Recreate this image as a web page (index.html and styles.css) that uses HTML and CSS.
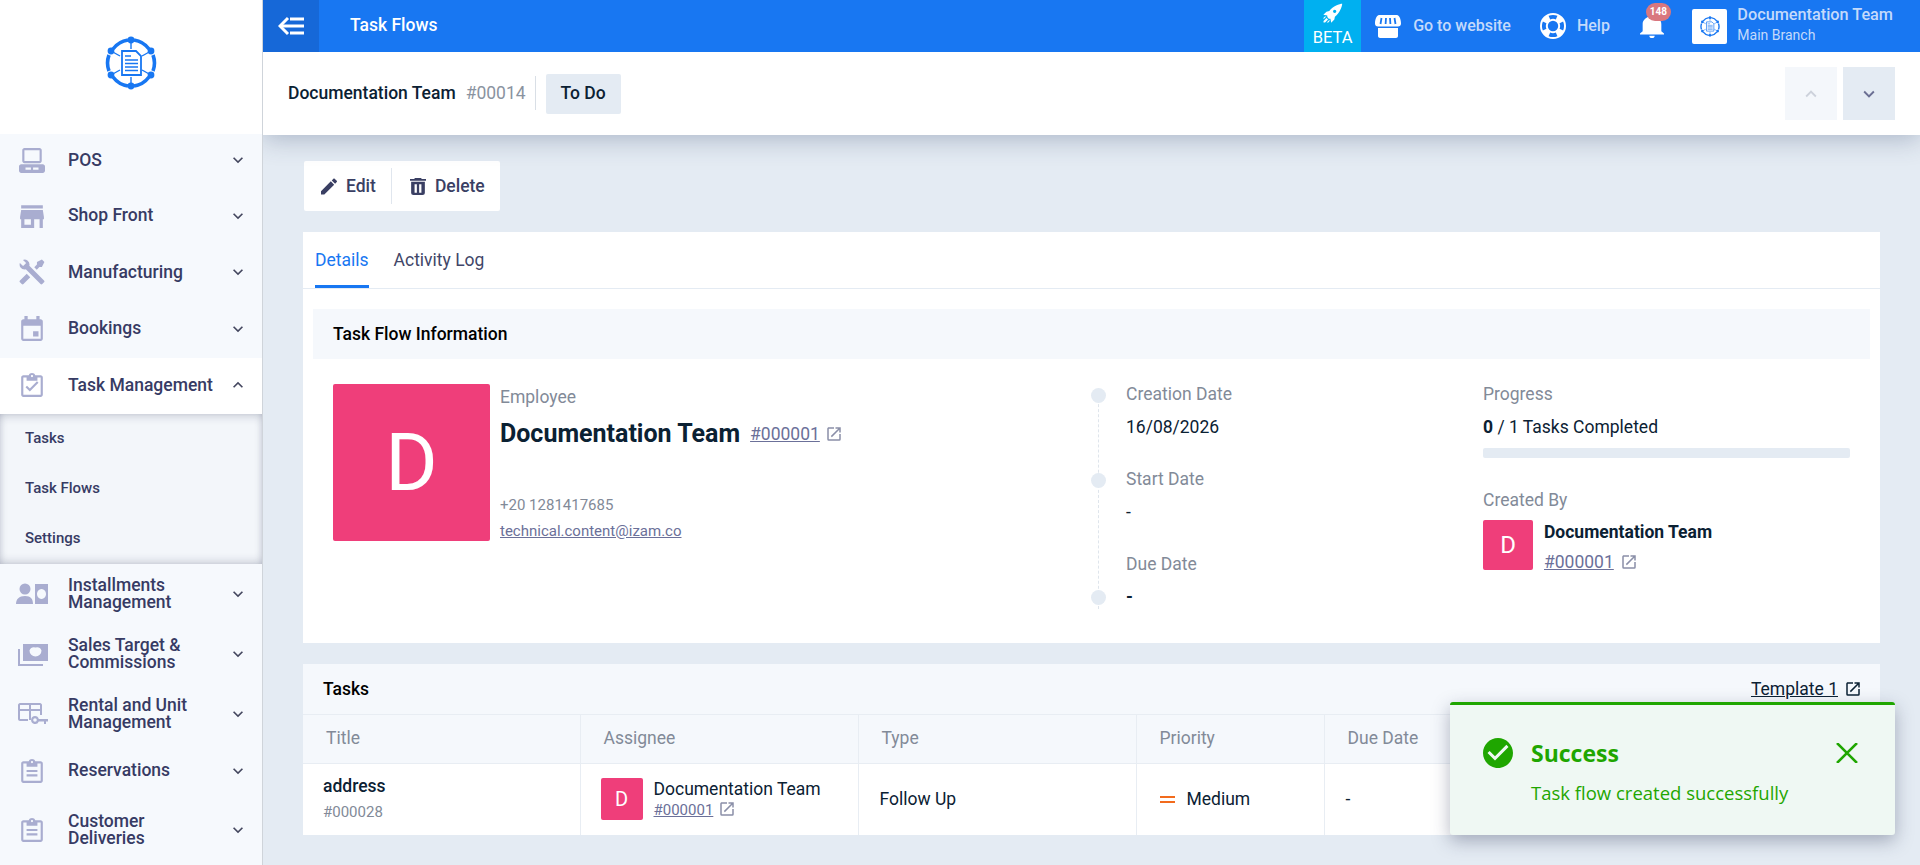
FILE: index.html
```html
<!DOCTYPE html>
<html lang="en">
<head>
    <meta charset="UTF-8">
    <meta name="viewport" content="width=device-width, initial-scale=1.0">
    <title>Task Flows</title>
    <link rel="stylesheet" href="styles.css">
</head>
<body>
    <svg class="sprite" aria-hidden="true">
        <symbol id="i-down" viewBox="0 0 24 24"><path d="M7.41,8.58L12,13.17L16.59,8.58L18,10L12,16L6,10L7.41,8.58Z"/></symbol>
        <symbol id="i-up" viewBox="0 0 24 24"><path d="M7.41,15.41L12,10.83L16.59,15.41L18,14L12,8L6,14L7.41,15.41Z"/></symbol>
        <symbol id="i-ext" viewBox="0 0 24 24"><path d="M14,3V5H17.59L7.76,14.83L9.17,16.24L19,6.41V10H21V3M19,19H5V5H12V3H5C3.89,3 3,3.9 3,5V19A2,2 0 0,0 5,21H19A2,2 0 0,0 21,19V12H19V19Z"/></symbol>
        <symbol id="i-clipboard" viewBox="0 0 24 24"><path d="M20 3h-5C14.600 1.800 13.400 1 12 1s-2.600.8-3 2H4C2.900 3 2 3.900 2 5v16c0 1.100.9 2 2 2h16c1.100 0 2-.9 2-2V5c0-1.100-.9-2-2-2zm-8-.2c.6 0 1 .4 1 1s-.4 1-1 1-1-.4-1-1 .4-1 1-1zM20 21H4V5h3v3h10V5h3v16zM7 11h10v2H7zm0 4h10v2H7z"/></symbol>
        <symbol id="i-logo" viewBox="0 0 52 54">
            <g fill="none" stroke="currentColor" stroke-width="3.600">
                <path d="M8 13A23 23 0 0 1 23 4M29 4A23 23 0 0 1 44 13M48 19A23 23 0 0 1 48 35M44 41A23 23 0 0 1 29 50M23 50A23 23 0 0 1 8 41M4 35A23 23 0 0 1 4 19"/>
            </g>
            <g stroke="currentColor" stroke-width="1.400">
                <path d="M26 4V13M26 41V50M6 15L15 20M46 15L37 20M6 39L15 34M46 39L37 34"/>
            </g>
            <g fill="currentColor">
                <circle cx="26" cy="4" r="3.400"/><circle cx="26" cy="50" r="3.400"/>
                <circle cx="6" cy="15" r="3.400"/><circle cx="46" cy="15" r="3.400"/>
                <circle cx="6" cy="39" r="3.400"/><circle cx="46" cy="39" r="3.400"/>
            </g>
            <path d="M17 15H31L36 20V39H17Z" fill="#fff" stroke="currentColor" stroke-width="1.800"/>
            <path d="M20 20H26M20 24H33M20 27.500H33M20 31H33M20 34.500H33" stroke="currentColor" stroke-width="1.400"/>
        </symbol>
    </svg>

    <aside class="sidebar">
        <div class="sidebar-logo">
            <svg class="logo-main"><use href="#i-logo"/></svg>
        </div>
        <nav class="nav">
            <a class="nav-item first" href="#">
                <svg class="nav-icon" viewBox="0 0 24 24"><path d="M5 1h14c1 0 2 1 2 2v10c0 1-1 2-2 2H5c-1 0-2-1-2-2V3c0-1 1-2 2-2zm0 2v10h14V3zM2 16h20c1 0 2 1 2 2v4c0 1-1 2-2 2H2c-1 0-2-1-2-2v-4c0-1 1-2 2-2zm4 3v2h5v-2zm7 0v2h5v-2z" fill-rule="evenodd"/></svg>
                <span>POS</span>
                <svg class="chev"><use href="#i-down"/></svg>
            </a>
            <a class="nav-item" href="#">
                <svg class="nav-icon" viewBox="0 0 24 24"><path d="M2 2H22V5H2V2M2 6.500H22L23 13V15H22V23H19V15H14V23H2V15H1V13L2 6.500M5 15V20H11V15H5Z"/></svg>
                <span>Shop Front</span>
                <svg class="chev"><use href="#i-down"/></svg>
            </a>
            <a class="nav-item" href="#">
                <svg class="nav-icon" viewBox="1.500 1.500 21 21"><path d="M21.71 20.29L20.29 21.71A1 1 0 0 1 18.88 21.71L7 9.850A3.810 3.810 0 0 1 6 10A4 4 0 0 1 2.220 4.700L4.760 7.240L5.290 6.710L6.710 5.290L7.240 4.760L4.700 2.220A4 4 0 0 1 10 6A3.810 3.810 0 0 1 9.850 7L21.71 18.88A1 1 0 0 1 21.71 20.29M2.290 18.88A1 1 0 0 0 2.290 20.29L3.710 21.71A1 1 0 0 0 5.120 21.71L10.59 16.25L7.760 13.42M20 2L16 4V6L13.830 8.170L15.830 10.17L18 8H20L22 4Z"/></svg>
                <span>Manufacturing</span>
                <svg class="chev"><use href="#i-down"/></svg>
            </a>
            <a class="nav-item" href="#">
                <svg class="nav-icon" viewBox="0 0 24 24"><path d="M20 3h-1V0h-3v3H8V0H5v3H4C2.900 3 2 3.900 2 5v16c0 1.100.9 2 2 2h16c1.100 0 2-.9 2-2V5c0-1.100-.9-2-2-2zm0 18H4V9h16v12zm-7-7h5v5h-5z"/></svg>
                <span>Bookings</span>
                <svg class="chev"><use href="#i-down"/></svg>
            </a>
            <a class="nav-item open" href="#">
                <svg class="nav-icon" viewBox="0 0 24 24"><path d="M20 3h-5C14.600 1.800 13.400 1 12 1s-2.600.8-3 2H4C2.900 3 2 3.900 2 5v16c0 1.100.9 2 2 2h16c1.100 0 2-.9 2-2V5c0-1.100-.9-2-2-2zm-8-.2c.6 0 1 .4 1 1s-.4 1-1 1-1-.4-1-1 .4-1 1-1zM20 21H4V5h3v3h10V5h3v16zM10 18l-4-4 1.400-1.400L10 15.200l6.600-6.600L18 10z"/></svg>
                <span>Task Management</span>
                <svg class="chev"><use href="#i-up"/></svg>
            </a>
            <div class="subnav">
                <a href="#">Tasks</a>
                <a href="#">Task Flows</a>
                <a href="#">Settings</a>
            </div>
            <a class="nav-item tall" href="#">
                <svg class="nav-icon wide" viewBox="0 0 32 24"><circle cx="9" cy="7" r="5.500"/><path d="M0 22c0-5 3-8 9-8s8 3 8 8zM19 2h13v20H19zm6.500 5a4.500 5 0 1 0 .01 0z" fill-rule="evenodd"/></svg>
                <span>Installments<br>Management</span>
                <svg class="chev"><use href="#i-down"/></svg>
            </a>
            <a class="nav-item tall" href="#">
                <svg class="nav-icon wide" viewBox="0 0 32 24"><path d="M7 2h25v17H7zm12.500 3.500a5 5 0 0 0-6 3 5 5 0 0 0 12 0 5 5 0 0 0-6-3zM2 7h2v15h23v2H2z" fill-rule="evenodd"/></svg>
                <span>Sales Target &amp;<br>Commissions</span>
                <svg class="chev"><use href="#i-down"/></svg>
            </a>
            <a class="nav-item tall" href="#">
                <svg class="nav-icon wide" viewBox="0 0 32 24"><path d="M4 1h20c1 0 2 1 2 2v10h-2V9H15v9h-2V9H4v8h8v2H4c-1 0-2-1-2-2V3c0-1 1-2 2-2zm0 2v4h9V3zm11 0v4h9V3zM19 14a4 4 0 0 1 3.800 3H32v2.500h-2V22h-2v-2.500h-5.200A4 4 0 1 1 19 14zm0 2.200a1.800 1.800 0 1 0 0 3.600 1.800 1.800 0 0 0 0-3.600z" fill-rule="evenodd"/></svg>
                <span>Rental and Unit<br>Management</span>
                <svg class="chev"><use href="#i-down"/></svg>
            </a>
            <a class="nav-item mid" href="#">
                <svg class="nav-icon"><use href="#i-clipboard"/></svg>
                <span>Reservations</span>
                <svg class="chev"><use href="#i-down"/></svg>
            </a>
            <a class="nav-item tall" href="#">
                <svg class="nav-icon"><use href="#i-clipboard"/></svg>
                <span>Customer<br>Deliveries</span>
                <svg class="chev"><use href="#i-down"/></svg>
            </a>
        </nav>
    </aside>

    <div class="main">
        <header class="topbar">
            <a class="back" href="#">
                <svg width="26" height="20" viewBox="0 0 26 20"><path d="M10 2L2 10l8 8" fill="none" stroke="#fff" stroke-width="3"/><path d="M3 10H26M12 3H26M12 17H26" stroke="#fff" stroke-width="3"/></svg>
            </a>
            <div class="page-title">Task Flows</div>
            <a class="beta" href="#">
                <svg width="20" height="20" viewBox="2.500 3.500 18 18"><path fill="#fff" d="M2.810,14.12L5.640,11.29L8.170,10.79C11.39,6.410 17.55,4.220 19.78,4.220C19.78,6.450 17.59,12.61 13.21,15.83L12.71,18.36L9.880,21.19L9.170,17.66C7.760,17.66 7.760,17.66 7.050,16.95C6.340,16.24 6.340,16.24 6.340,14.83L2.810,14.12M5.640,16.95L7.050,18.36L4.390,21.03H2.970V19.61L5.640,16.95M4.220,15.54L5.460,15.71L3,18.16V16.74L4.220,15.54M8.290,18.54L8.460,19.78L7.260,21H5.840L8.290,18.54M13,9.500A1.500,1.500 0 0,0 11.50,11A1.500,1.500 0 0,0 13,12.50A1.500,1.500 0 0,0 14.50,11A1.500,1.500 0 0,0 13,9.500Z"/></svg>
                <span>BETA</span>
            </a>
            <a class="top-link website" href="#">
                <svg width="26" height="23" viewBox="0 0 26 23"><path fill="#fff" d="M4 0H22C24 0 26 4 26 8.500 26 10.500 24.800 11.500 23 11.500H3C1.200 11.500 0 10.500 0 8.500 0 4 2 0 4 0ZM3 13H23V21C23 22 22 23 21 23H5C4 23 3 22 3 21Z"/><path d="M6.500 3L5.500 9M11 3L10.600 9M15 3L15.400 9M19.500 3L20.500 9" stroke="#1877f2" stroke-width="1.800"/></svg>
                <span>Go to website</span>
            </a>
            <a class="top-link help" href="#">
                <svg width="26" height="26" viewBox="2 2 20 20"><path fill="#fff" d="M19.790,15.41C20.740,13.24 20.740,10.75 19.790,8.590L17.050,9.830C17.650,11.21 17.650,12.78 17.060,14.17L19.790,15.41M8.590,19.790C10.750,20.740 13.240,20.740 15.410,19.790L14.170,17.050C12.790,17.650 11.210,17.650 9.840,17.060L8.590,19.790M4.210,8.590C3.260,10.760 3.260,13.240 4.210,15.41L6.950,14.170C6.350,12.790 6.350,11.210 6.950,9.830L4.210,8.590M15.410,4.210C13.240,3.260 10.760,3.260 8.590,4.210L9.830,6.950C11.210,6.350 12.780,6.350 14.170,6.940L15.410,4.210M12,2A10,10 0 0,1 22,12A10,10 0 0,1 12,22A10,10 0 0,1 2,12A10,10 0 0,1 12,2M12,8A4,4 0 0,0 8,12A4,4 0 0,0 12,16A4,4 0 0,0 16,12A4,4 0 0,0 12,8Z"/></svg>
                <span>Help</span>
            </a>
            <a class="bell" href="#">
                <svg width="24" height="24" viewBox="3 2 18 21" preserveAspectRatio="none"><path fill="#fff" d="M21,19V20H3V19L5,17V11C5,7.900 7.030,5.170 10,4.290C10,4.190 10,4.100 10,4A2,2 0 0,1 12,2A2,2 0 0,1 14,4C14,4.100 14,4.190 14,4.290C16.970,5.170 19,7.900 19,11V17L21,19M14,21A2,2 0 0,1 12,23A2,2 0 0,1 10,21"/></svg>
                <span class="badge">148</span>
            </a>
            <a class="account" href="#">
                <span class="account-logo"><svg><use href="#i-logo"/></svg></span>
                <span class="account-text">
                    <strong>Documentation Team</strong>
                    <small>Main Branch</small>
                </span>
            </a>
        </header>

        <div class="subheader">
            <div class="record-name">Documentation Team</div>
            <div class="record-no">#00014</div>
            <div class="status">To Do</div>
            <div class="pager">
                <a class="pager-btn off" href="#"><svg><use href="#i-up"/></svg></a>
                <a class="pager-btn" href="#"><svg><use href="#i-down"/></svg></a>
            </div>
        </div>

        <div class="content">
            <div class="actions">
                <a class="action" href="#">
                    <svg viewBox="3 3 18 18"><path d="M20.710,7.040C21.100,6.650 21.100,6 20.710,5.630L18.370,3.290C18,2.900 17.350,2.900 16.960,3.290L15.120,5.120L18.870,8.870M3,17.250V21H6.750L17.810,9.930L14.060,6.180L3,17.250Z"/></svg>
                    Edit
                </a>
                <a class="action" href="#">
                    <svg viewBox="5 3 14 18" preserveAspectRatio="none"><path fill-rule="evenodd" d="M19,4H15.500L14.500,3H9.500L8.500,4H5V6H19M6,19A2,2 0 0,0 8,21H16A2,2 0 0,0 18,19V7H6V19ZM9,9.500H11V18.500H9ZM13,9.500H15V18.500H13Z"/></svg>
                    Delete
                </a>
            </div>

            <section class="card details">
                <div class="tabs">
                    <a class="tab active" href="#">Details</a>
                    <a class="tab" href="#">Activity Log</a>
                </div>
                <h2 class="info-title">Task Flow Information</h2>
                <div class="info-body">
                    <div class="employee">
                        <div class="avatar avatar-lg">D</div>
                        <div class="employee-text">
                            <div class="label">Employee</div>
                            <div class="employee-name">
                                Documentation Team
                                <a class="ref" href="#">#000001</a>
                                <svg class="ext"><use href="#i-ext"/></svg>
                            </div>
                            <div class="phone">+20 1281417685</div>
                            <a class="email" href="#">technical.content@izam.co</a>
                        </div>
                    </div>
                    <div class="timeline">
                        <div class="step">
                            <span class="dot"></span>
                            <div>
                                <div class="label">Creation Date</div>
                                <div class="value">16/08/2026</div>
                            </div>
                        </div>
                        <div class="step">
                            <span class="dot"></span>
                            <div>
                                <div class="label">Start Date</div>
                                <div class="value">-</div>
                            </div>
                        </div>
                        <div class="step">
                            <span class="dot dot-end"></span>
                            <div>
                                <div class="label">Due Date</div>
                                <div class="value"><b>-</b></div>
                            </div>
                        </div>
                    </div>
                    <div class="progress-col">
                        <div class="label">Progress</div>
                        <div class="value"><b>0</b> / 1 Tasks Completed</div>
                        <div class="progress-bar"></div>
                        <div class="label created-label">Created By</div>
                        <div class="creator">
                            <div class="avatar avatar-md">D</div>
                            <div>
                                <div class="creator-name">Documentation Team</div>
                                <a class="ref" href="#">#000001</a>
                                <svg class="ext"><use href="#i-ext"/></svg>
                            </div>
                        </div>
                    </div>
                </div>
            </section>

            <section class="card tasks">
                <div class="tasks-head">
                    <h2>Tasks</h2>
                    <a class="template" href="#">Template 1</a>
                    <svg class="ext dark"><use href="#i-ext"/></svg>
                </div>
                <table class="tasks-table">
                    <colgroup>
                        <col class="col-a"><col class="col-b"><col class="col-b"><col class="col-c"><col>
                    </colgroup>
                    <thead>
                        <tr>
                            <th>Title</th>
                            <th>Assignee</th>
                            <th>Type</th>
                            <th>Priority</th>
                            <th>Due Date</th>
                        </tr>
                    </thead>
                    <tbody>
                        <tr>
                            <td>
                                <div class="task-title">address</div>
                                <div class="task-no">#000028</div>
                            </td>
                            <td>
                                <div class="assignee">
                                    <div class="avatar avatar-sm">D</div>
                                    <div>
                                        <div class="assignee-name">Documentation Team</div>
                                        <a class="ref small" href="#">#000001</a>
                                        <svg class="ext"><use href="#i-ext"/></svg>
                                    </div>
                                </div>
                            </td>
                            <td>Follow Up</td>
                            <td>
                                <span class="priority"><i></i>Medium</span>
                            </td>
                            <td>-</td>
                        </tr>
                    </tbody>
                </table>
            </section>
        </div>
    </div>

    <div class="toast">
        <div class="toast-head">
            <svg class="toast-check" viewBox="2 2 20 20"><path d="M12 2C6.500 2 2 6.500 2 12S6.500 22 12 22 22 17.500 22 12 17.500 2 12 2M10 17L5 12L6.410 10.590L10 14.170L17.590 6.580L19 8L10 17Z"/></svg>
            <strong>Success</strong>
            <svg class="toast-close" viewBox="0 0 22 20"><path d="M1 0L21 20M21 0L1 20" fill="none" stroke="#1fa600" stroke-width="2.500"/></svg>
        </div>
        <p>Task flow created successfully</p>
    </div>
</body>
</html>
```
FILE: styles.css
```css
* {
    box-sizing: border-box;
}

body {
    margin: 0;
    height: 865px;
    display: flex;
    overflow: hidden;
    font-family: Roboto, "Liberation Sans", sans-serif;
    font-size: 17.5px;
    color: #0b2133;
    background-color: #e4ebf3;
}

a {
    color: inherit;
    text-decoration: none;
}

.sprite {
    display: none;
}

/* sidebar */
.sidebar {
    position: relative;
    z-index: 3;
    width: 263px;
    flex-shrink: 0;
    background-color: #f6f9fd;
    border-right: 1px solid #cfd4da;
    overflow: hidden;
}

.sidebar-logo {
    height: 134px;
    display: flex;
    justify-content: center;
    padding-top: 36px;
    background-color: #fff;
}

.logo-main {
    width: 52px;
    height: 54px;
    color: #1877f2;
}

.nav-item {
    display: flex;
    align-items: center;
    height: 56.5px;
    padding-left: 19px;
    padding-right: 14px;
    padding-bottom: 1px;
    font-weight: 500;
    line-height: 17px;
    color: #373b64;
}

.nav-item.first {
    height: 54px;
    padding-bottom: 2px;
}

.nav-item.tall {
    height: 60px;
}

.nav-item.mid {
    height: 56px;
    padding-bottom: 3px;
}

.nav-item.open {
    background-color: #fff;
}

.nav-item span {
    flex: 1;
}

.nav-icon {
    width: 26px;
    height: 26px;
    margin-right: 23px;
    fill: #a9add0;
}

.nav-icon.wide {
    width: 32px;
    height: 24px;
    margin-left: -3px;
    margin-right: 20px;
}

.chev {
    width: 20px;
    height: 20px;
    fill: #44475f;
}

.subnav {
    height: 150px;
    background-color: #f3f6fa;
    box-shadow: inset 0 6px 10px -4px rgba(40, 50, 80, 0.22), inset 0 -6px 10px -4px rgba(40, 50, 80, 0.22), inset -6px 0 10px -6px rgba(40, 50, 80, 0.12), inset 6px 0 10px -6px rgba(40, 50, 80, 0.12);
}

.subnav a {
    display: flex;
    align-items: center;
    height: 50px;
    padding-left: 25px;
    padding-bottom: 2px;
    font-size: 15px;
    font-weight: 500;
    color: #373b64;
}

/* top bar */
.main {
    flex: 1;
    min-width: 0;
}

.topbar {
    position: relative;
    z-index: 2;
    height: 52px;
    display: flex;
    align-items: center;
    padding-right: 27px;
    background-color: #1877f2;
}

.back {
    width: 56px;
    height: 52px;
    display: flex;
    align-items: center;
    justify-content: center;
    background-color: #1668d8;
}

.page-title {
    flex: 1;
    margin-left: 31px;
    padding-bottom: 2px;
    font-weight: 500;
    color: #fff;
}

.beta {
    width: 57px;
    height: 52px;
    display: flex;
    flex-direction: column;
    align-items: center;
    background-color: #00b0f0;
    color: #fff;
    font-size: 16.5px;
    line-height: 18px;
}

.beta svg {
    margin-top: 3px;
    margin-bottom: 6px;
}

.top-link {
    display: flex;
    align-items: center;
    font-size: 16px;
    font-weight: 500;
    color: #c4dafb;
}

.top-link span {
    padding-bottom: 2px;
}

.website {
    margin-left: 14px;
}

.website span {
    margin-left: 12px;
}

.help {
    margin-left: 29px;
}

.help span {
    margin-left: 11px;
}

.bell {
    position: relative;
    display: flex;
    margin-left: 30px;
}

.badge {
    position: absolute;
    top: -11px;
    left: 6px;
    width: 25px;
    height: 18px;
    border-radius: 9px;
    background-color: #d9777f;
    color: #fff;
    font-size: 10px;
    font-weight: 700;
    line-height: 18px;
    text-align: center;
}

.account {
    display: flex;
    align-items: center;
    margin-left: 28.4px;
}

.account-logo {
    width: 35px;
    height: 35px;
    display: flex;
    align-items: center;
    justify-content: center;
    border-radius: 2px;
    background-color: #fff;
    color: #1877f2;
}

.account-logo svg {
    width: 20px;
    height: 21px;
}

.account-text {
    margin-left: 10px;
    padding-bottom: 3px;
    color: #c4dafb;
}

.account-text strong {
    display: block;
    font-size: 16.25px;
    font-weight: 500;
    line-height: 20px;
}

.account-text small {
    display: block;
    font-size: 14px;
    line-height: 20px;
}

/* record header */
.subheader {
    height: 83px;
    display: flex;
    align-items: center;
    padding-left: 25px;
    padding-right: 25px;
    background-color: #fff;
    box-shadow: 0 4px 24px rgba(40, 60, 100, 0.3);
    position: relative;
}

.record-name {
    margin-bottom: 2px;
    font-weight: 500;
    color: #0b2133;
}

.record-no {
    margin-left: 10px;
    margin-bottom: 2px;
    padding-right: 9px;
    border-right: 1px solid #d9dfe6;
    line-height: 34px;
    color: #8a93a0;
}

.status {
    margin-left: 10px;
    padding: 0 15px;
    height: 40px;
    line-height: 38px;
    border-radius: 2px;
    background-color: #e4ebf3;
    font-weight: 500;
}

.pager {
    margin-left: auto;
    display: flex;
    gap: 6px;
}

.pager-btn {
    width: 52px;
    height: 53px;
    display: flex;
    align-items: center;
    justify-content: center;
    background-color: #e4ebf3;
    fill: #6b6f93;
}

.pager-btn.off {
    background-color: #f4f7fb;
    fill: #cdd2dc;
}

.pager-btn svg {
    width: 22px;
    height: 22px;
}

/* content */
.content {
    padding: 26px 40px 0;
}

.actions {
    width: 196px;
    height: 50px;
    display: flex;
    align-items: center;
    margin-left: 1px;
    background-color: #fff;
    border-radius: 2px;
}

.action {
    display: flex;
    align-items: center;
    height: 36px;
    padding-left: 17px;
    padding-right: 15px;
    font-weight: 500;
    color: #3a3f63;
}

.action + .action {
    border-left: 1px solid #e0e6ee;
    padding-left: 18px;
}

.action svg {
    width: 16px;
    height: 17px;
    margin-right: 9px;
    fill: #3a3f63;
}

.card {
    background-color: #fff;
}

.details {
    margin-top: 21px;
    height: 411px;
}

.tabs {
    height: 57px;
    display: flex;
    gap: 25px;
    padding-left: 12px;
    border-bottom: 1px solid #e4ebf3;
}

.tab {
    height: 56px;
    padding-top: 18px;
    color: #414668;
}

.tab.active {
    color: #1877f2;
    border-bottom: 3px solid #1877f2;
}

.info-title {
    margin: 20px 10px 0;
    height: 50px;
    padding-left: 20px;
    background-color: #f5f8fc;
    font-size: 17.5px;
    font-weight: 500;
    line-height: 50px;
    color: #000;
}

.info-body {
    display: grid;
    grid-template-columns: 758px 392px 1fr;
    padding-top: 25px;
    padding-left: 30px;
}

.label {
    color: #828a98;
    line-height: 20px;
}

.value {
    margin-top: 13px;
    line-height: 20px;
    color: #0b2133;
}

.avatar {
    flex-shrink: 0;
    display: flex;
    align-items: center;
    justify-content: center;
    border-radius: 2px;
    background-color: #ef3e7a;
    color: #fff;
}

.avatar-lg {
    width: 157px;
    height: 157px;
    font-size: 80px;
}

.avatar-md {
    width: 50px;
    height: 50px;
    font-size: 24px;
}

.avatar-sm {
    width: 42px;
    height: 42px;
    font-size: 20px;
}

.employee {
    display: flex;
}

.employee-text {
    margin-left: 10px;
    padding-top: 3px;
}

.employee-name {
    margin-top: 12px;
    font-size: 25px;
    font-weight: 700;
    line-height: 30px;
    display: flex;
    align-items: center;
}

.ref {
    font-size: 17.5px;
    font-weight: 400;
    text-decoration: underline;
    color: #6b7099;
}

.ref.small {
    font-size: 15px;
}

.employee-name .ref {
    margin-left: 10px;
}

.ext {
    width: 18px;
    height: 18px;
    margin-left: 2px;
    vertical-align: -3px;
    fill: #8a8fa8;
}

.employee-name .ext {
    margin-left: 5px;
}

.tasks-head .ext {
    margin-left: 6px;
}

.assignee .ext {
    margin-left: 0;
}

.ext.dark {
    fill: #0b2133;
}

.phone {
    margin-top: 46px;
    font-size: 15px;
    line-height: 20px;
    color: #828a98;
}

.email {
    display: block;
    margin-top: 6px;
    font-size: 15px;
    line-height: 20px;
    text-decoration: underline;
    color: #6b7099;
}

.timeline {
    position: relative;
}

.timeline::before {
    content: "";
    position: absolute;
    left: 7px;
    top: 10px;
    bottom: 30px;
    border-left: 1px dashed #dfe5ec;
}

.step {
    display: flex;
    height: 85px;
    position: relative;
}

.dot {
    width: 15px;
    height: 15px;
    margin-top: 4px;
    margin-right: 20px;
    border-radius: 50%;
    background-color: #e4ebf3;
}

.dot-end {
    margin-top: 36px;
}

.progress-bar {
    width: 367px;
    height: 10px;
    margin-top: 11px;
    border-radius: 2px;
    background-color: #e4ebf3;
}

.created-label {
    margin-top: 32px;
}

.creator {
    display: flex;
    margin-top: 10px;
}

.creator > div:last-child {
    margin-left: 11px;
}

.creator-name {
    padding-top: 1px;
    font-weight: 700;
    line-height: 22px;
    margin-bottom: 9px;
}

/* tasks table */
.tasks {
    margin-top: 21px;
}

.tasks-head {
    height: 51px;
    display: flex;
    align-items: center;
    padding-left: 20px;
    padding-right: 18px;
    background-color: #f5f8fc;
    border-bottom: 1px solid #e8edf3;
}

.tasks-head h2 {
    flex: 1;
    margin: 0;
    font-size: 17.5px;
    font-weight: 500;
    color: #000;
}

.template {
    text-decoration: underline;
    color: #0b2133;
}

.tasks-table {
    width: 100%;
    table-layout: fixed;
    border-collapse: collapse;
}

.col-a {
    width: 277px;
}

.col-b {
    width: 278px;
}

.col-c {
    width: 188px;
}

.tasks-table th {
    height: 48px;
    padding-left: 23px;
    padding-bottom: 2px;
    background-color: #f5f8fc;
    border-right: 1px solid #e8edf3;
    border-bottom: 1px solid #e8edf3;
    font-weight: 400;
    text-align: left;
    color: #828a98;
}

.tasks-table td {
    height: 72px;
    padding-left: 21px;
    border-right: 1px solid #e8edf3;
    color: #0b2133;
}

.tasks-table td:first-child {
    padding-left: 20px;
    padding-bottom: 3px;
}

.tasks-table td:nth-child(2) {
    padding-left: 20px;
}

.task-title {
    font-weight: 500;
    line-height: 20px;
}

.task-no {
    margin-top: 7px;
    font-size: 15px;
    line-height: 18px;
    color: #828a98;
}

.assignee {
    display: flex;
    align-items: center;
    line-height: 20px;
}

.assignee > div:last-child {
    margin-left: 11px;
}

.priority {
    display: flex;
    align-items: center;
}

.priority i {
    width: 15px;
    height: 7px;
    margin-left: 2px;
    margin-right: 12px;
    border-top: 2px solid #f26b1d;
    border-bottom: 2px solid #f26b1d;
}

/* toast */
.toast {
    position: absolute;
    z-index: 4;
    left: 1450px;
    top: 702px;
    width: 445px;
    height: 133px;
    padding: 32px 37px 0 33px;
    background-color: #eff8f3;
    border-top: 3px solid #1fa600;
    border-radius: 3px;
    box-shadow: 0 6px 18px rgba(40, 50, 80, 0.35);
    color: #1fa600;
    font-family: "Open Sans", sans-serif;
}

.toast-head {
    display: flex;
    align-items: center;
}

.toast-check {
    width: 30px;
    height: 30px;
    fill: #1fa600;
}

.toast-head strong {
    flex: 1;
    margin-left: 18px;
    font-size: 23px;
    font-weight: 700;
}

.toast-close {
    width: 22px;
    height: 20px;
}

.toast p {
    margin: 12px 0 0 48px;
    font-size: 18.5px;
    line-height: 24px;
}
```
